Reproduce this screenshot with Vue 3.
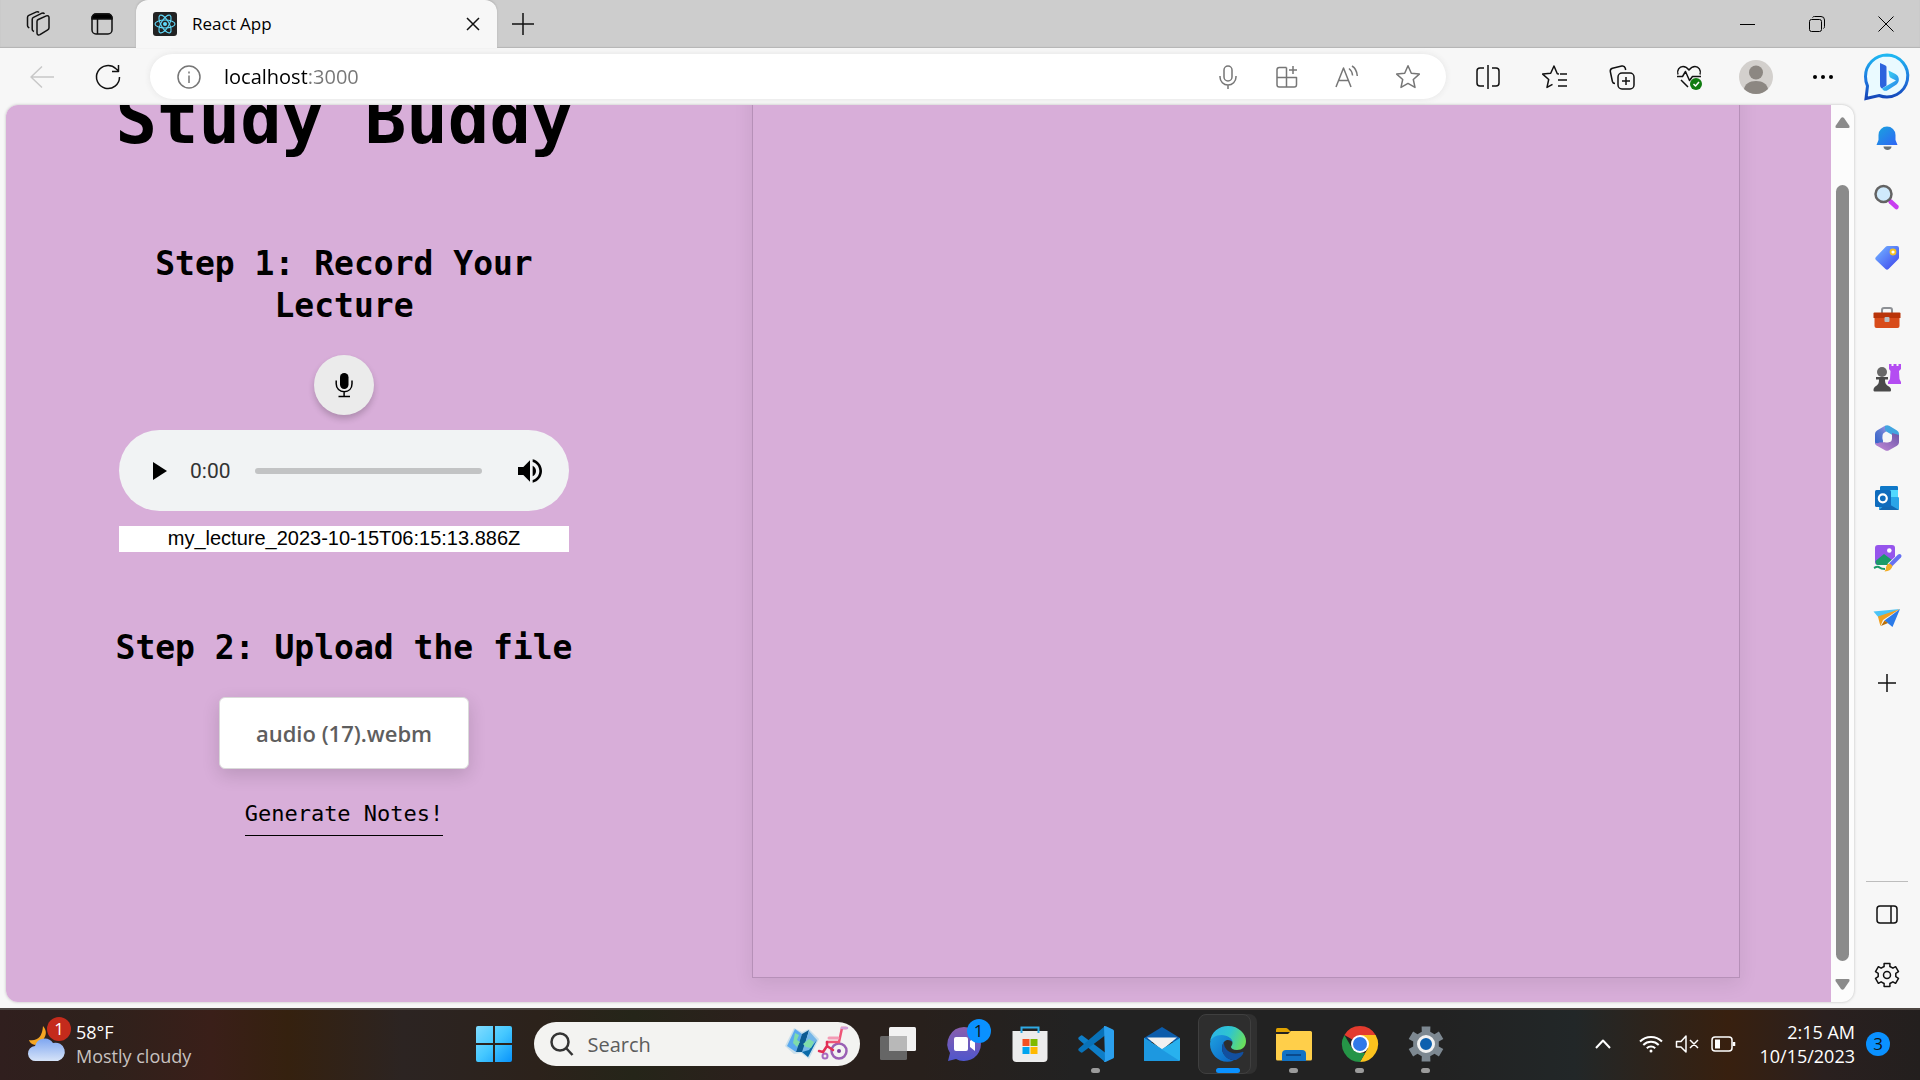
<template>
  <div class="desktop">
    <header class="tabstrip">
      <button class="icon-btn workspaces" aria-label="Workspaces">
        <svg width="26" height="26" viewBox="0 0 26 26" class="line">
          <path d="M11 10.500c0-1 .5-1.600 1.300-2l8-3.600c1.500-.6 2.700.1 2.700 1.600v10.200c0 1-.5 1.700-1.300 2.100l-7.700 4.900c-1.500.8-3 0-3-1.600z" />
          <path d="M8 20.500l-.6-.3c-.8-.5-1.200-1.100-1.200-2V8.500c0-1 .5-1.700 1.300-2.100L16 2.200c1-.4 2 0 2.400.8" />
          <path d="M3.300 17l-.6-.4c-.8-.5-1.200-1.100-1.200-2V6.500c0-1 .5-1.700 1.300-2.100L10.500.9c1-.4 2-.1 2.500.6" />
        </svg>
      </button>
      <button class="icon-btn tab-actions" aria-label="Tab actions">
        <svg width="24" height="24" viewBox="0 0 24 24" class="line">
          <rect x="2" y="2" width="20" height="20" rx="4" />
          <path d="M2 7V6a4 4 0 0 1 4-4h12a4 4 0 0 1 4 4v1z" fill="#000" />
          <path d="M7.500 7v15" />
        </svg>
      </button>
      <div class="tab">
        <svg width="24" height="24" viewBox="0 0 24 24">
          <rect width="24" height="24" rx="3" fill="#222" />
          <g fill="none" stroke="#61dafb" stroke-width="1.100">
            <ellipse cx="12" cy="12" rx="10" ry="4" />
            <ellipse cx="12" cy="12" rx="10" ry="4" transform="rotate(60 12 12)" />
            <ellipse cx="12" cy="12" rx="10" ry="4" transform="rotate(120 12 12)" />
          </g>
          <circle cx="12" cy="12" r="2" fill="#61dafb" />
        </svg>
        <span class="tab-title">React App</span>
        <button class="icon-btn" aria-label="Close tab">
          <svg width="14" height="14" viewBox="0 0 14 14" class="line"><path d="M1 1l12 12M13 1L1 13" /></svg>
        </button>
      </div>
      <button class="icon-btn new-tab" aria-label="New tab">
        <svg width="22" height="22" viewBox="0 0 22 22" class="line"><path d="M11 0v22M0 11h22" /></svg>
      </button>
      <div class="window-controls">
        <button class="icon-btn" aria-label="Minimize">
          <svg width="16" height="16" viewBox="0 0 16 16" class="thin"><path d="M0 8.500h15" /></svg>
        </button>
        <button class="icon-btn" aria-label="Restore">
          <svg width="16" height="16" viewBox="0 0 16 16" class="thin">
            <rect x=".5" y="3.500" width="12" height="12" rx="2" />
            <path d="M3.500 1.500q.5-1 2-1H12q3.500 0 3.500 3.500v6.500q0 1.500-1 2" />
          </svg>
        </button>
        <button class="icon-btn" aria-label="Close">
          <svg width="16" height="16" viewBox="0 0 16 16" class="thin"><path d="M.5.5l15 15M15.500.5l-15 15" /></svg>
        </button>
      </div>
    </header>

    <div class="toolbar">
      <button class="icon-btn back" aria-label="Back" disabled>
        <svg width="24" height="24" viewBox="0 0 24 24" class="line"><path d="M24 12H1M12 1.500L1 12l11 10.500" /></svg>
      </button>
      <button class="icon-btn reload" aria-label="Refresh">
        <svg width="26" height="26" viewBox="0 0 26 26" class="line">
          <path d="M24.500 13A11.500 11.500 0 1 1 21 4.800L23.500 7M23.500 1v6.500H17" />
        </svg>
      </button>
      <form class="address" @submit.prevent>
        <button type="button" class="icon-btn" aria-label="Site information">
          <svg width="24" height="24" viewBox="0 0 24 24" class="line grey">
            <circle cx="12" cy="12" r="11" /><path d="M12 10.500V18M12 6.500v2" />
          </svg>
        </button>
        <input v-model="address" class="address-input" aria-label="Address" />
        <button type="button" class="icon-btn" aria-label="Voice search">
          <svg width="24" height="24" viewBox="0 0 24 24" class="line grey">
            <rect x="8" y="1" width="8" height="15" rx="4" />
            <path d="M4 11v1a8 8 0 0 0 16 0v-1M12 20v4" />
          </svg>
        </button>
        <button type="button" class="icon-btn" aria-label="App available">
          <svg width="24" height="24" viewBox="0 0 24 24" class="line grey">
            <path d="M11.500 2.500H4.300C3 2.500 2 3.500 2 4.800v14.900C2 21 3 22 4.300 22h14.900c1.300 0 2.300-1 2.300-2.300V12.500H2M11.500 2.500V22M18 1v8M14 5h8" />
          </svg>
        </button>
        <button type="button" class="icon-btn" aria-label="Read aloud">
          <svg width="26" height="24" viewBox="0 0 26 24" class="line grey">
            <path d="M2 22L9.500 3 17 22M4.800 15.500h9.500M15 3.500c2 1.500 3.300 4 3.600 7M18 1c3.300 2 5 5.500 5.300 10" />
          </svg>
        </button>
        <button type="button" class="icon-btn" aria-label="Add to favorites">
          <svg width="26" height="26" viewBox="0 0 26 26" class="line grey">
            <path d="M13 1.800l3.300 7.400 8 .9-6 5.400 1.700 7.900-7-4-7 4 1.700-7.900-6-5.400 8-.9z" />
          </svg>
        </button>
      </form>
      <div class="tools">
        <button class="icon-btn" aria-label="Split screen">
          <svg width="26" height="26" viewBox="0 0 26 26" class="line">
            <path d="M9 4H5C3 4 2 5 2 7v12c0 2 1 3 3 3h4M17 4h4c2 0 3 1 3 3v12c0 2-1 3-3 3h-4M13 1v24" />
          </svg>
        </button>
        <button class="icon-btn" aria-label="Favorites">
          <svg width="26" height="26" viewBox="0 0 26 26" class="line">
            <path d="M17 10l-1.700-.3L12 2 8.700 9.200l-8 .9 6 5.400L5 23.400l5.500-3.100M18 10h7M16 16h9M16 22h9" />
          </svg>
        </button>
        <button class="icon-btn" aria-label="Collections">
          <svg width="26" height="26" viewBox="0 0 26 26" class="line">
            <rect x="9" y="9" width="16" height="16" rx="4" />
            <path d="M17 13v8M13 17h8M6 19.500c-1.500 0-2.300-.8-2.600-2L1.300 7.500C1 5.700 2 4.600 3.500 4.200L12.800 2c1.800-.3 3 .5 3.400 2l.5 2" />
          </svg>
        </button>
        <button class="icon-btn" aria-label="Browser essentials">
          <svg width="26" height="26" viewBox="0 0 26 26" class="line">
            <path d="M2 10.500C.5 6 3.500 2.500 7 2.500c2.700 0 4.500 1.500 6 3.500 1.500-2 3.300-3.500 6-3.500 3.500 0 6.500 3.500 5 8M1 12.500h5.500l3-5 4 9 3-4H25M5 16l7 7" />
            <circle cx="20" cy="20" r="6" fill="#107c10" stroke="none" />
            <path d="M17.500 20l2 2 3.500-4" stroke="#fff" />
          </svg>
        </button>
        <button class="icon-btn" aria-label="Profile">
          <svg width="34" height="34" viewBox="0 0 34 34">
            <circle cx="17" cy="17" r="17" fill="#d3d0cd" />
            <circle cx="17" cy="12.500" r="7" fill="#8c8782" />
            <path d="M5 29c1-5 5-8 12-8s11 3 12 8a17 17 0 0 1-24 0z" fill="#8c8782" />
          </svg>
        </button>
        <button class="icon-btn" aria-label="More">
          <svg width="20" height="20" viewBox="0 0 20 20">
            <circle cx="2" cy="10" r="2" /><circle cx="10" cy="10" r="2" /><circle cx="18" cy="10" r="2" />
          </svg>
        </button>
      </div>
      <button class="icon-btn bing" aria-label="Bing chat">
        <svg width="48" height="48" viewBox="0 0 48 48">
          <defs>
            <linearGradient id="bingRing" x1="0" y1="0" x2="0" y2="1">
              <stop offset="0" stop-color="#1fb8f2" /><stop offset=".6" stop-color="#1c72dc" /><stop offset="1" stop-color="#1546b8" />
            </linearGradient>
            <linearGradient id="bingB" x1="0" y1="0" x2="1" y2="1">
              <stop offset="0" stop-color="#43d8ee" /><stop offset=".4" stop-color="#35bdf0" /><stop offset="1" stop-color="#2579e8" />
            </linearGradient>
          </defs>
          <path d="M24 2a21 21 0 1 1-8 40.500L3 45.500 4.500 33C3 30 2.500 27 2.500 23.500A21.500 21.500 0 0 1 24 2z" fill="#eafaff" stroke="url(#bingRing)" stroke-width="3" />
          <path d="M17 10l5 2.300c1 .5 1.500 1 1.500 2.200v18L19 35.500c-1.300-.7-2-1.800-2-3.500z" fill="#2c63dd" />
          <path d="M25.500 17.500l7 3.500c4 2 4.500 7.500 1 10.500l-8.500 5.500c-2.500 1.500-4.800 1-6-1.500l14-8-5-2.500c-1-.5-1.300-1-1.600-2z" fill="url(#bingB)" />
        </svg>
      </button>
    </div>

    <div class="body">
      <div class="viewport">
        <main class="page">
          <section class="steps">
            <h1>Study Buddy</h1>
            <h2>Step 1: Record Your Lecture</h2>
            <button class="record" aria-label="Record">
              <svg width="18" height="26" viewBox="0 0 18 26">
                <rect x="5" y="1" width="8.500" height="16" rx="4.200" />
                <path d="M1.200 8.500v3.200c0 5 3.500 8 8 8s7.800-3 7.800-8V8.500M9.100 20v4M3.500 24.500h11.500" fill="none" stroke="#000" stroke-width="1.500" />
              </svg>
            </button>
            <div class="player">
              <button class="icon-btn" aria-label="Play">
                <svg width="14" height="18" viewBox="0 0 14 18"><path d="M0 0l14 9-14 9z" /></svg>
              </button>
              <span class="time">0:00</span>
              <input v-model="position" type="range" min="0" max="100" aria-label="Playback position" />
              <button class="icon-btn" aria-label="Mute">
                <svg width="24" height="24" viewBox="3 3 18 18">
                  <path d="M3 9v6h4l5 5V4L7 9H3zm13.500 3A4.500 4.500 0 0 0 14 7.970v8.050c1.480-.73 2.500-2.250 2.500-4.020zM14 3.230v2.060c2.890.86 5 3.540 5 6.710s-2.110 5.850-5 6.710v2.060c4.010-.91 7-4.490 7-8.770s-2.990-7.860-7-8.770z" />
                </svg>
              </button>
            </div>
            <input v-model="fileName" class="file-name" aria-label="Recording name" />
            <h2 class="second">Step 2: Upload the file</h2>
            <button class="upload">audio (17).webm</button>
            <button class="generate">Generate Notes!</button>
          </section>
          <section class="notes" aria-label="Notes"></section>
        </main>
        <div class="scrollbar">
          <svg width="15" height="11" viewBox="0 0 15 11"><path d="M6 1q1.500-1.500 3 0l5.500 8q.5 2-1 2h-12q-1.500 0-1-2z" /></svg>
          <div class="thumb"></div>
          <svg width="15" height="11" viewBox="0 0 15 11"><path d="M6 10q1.500 1.500 3 0l5.500-8q.5-2-1-2h-12q-1.500 0-1 2z" /></svg>
        </div>
      </div>

      <aside class="sidebar">
        <button class="icon-btn" aria-label="Notifications">
          <svg width="28" height="28" viewBox="0 0 28 28">
            <defs>
              <linearGradient id="bell" x1="0" y1="0" x2="1" y2="1"><stop offset="0" stop-color="#19a5de" /><stop offset="1" stop-color="#2f64f5" /></linearGradient>
            </defs>
            <path d="M10.500 22.500h8c0 2-2 3.500-4 3.500s-4-1.500-4-3.500z" fill="#6a7075" />
            <path d="M3.500 21l2-5V11a8.500 8.500 0 0 1 17 0v5l2 5z" fill="url(#bell)" />
          </svg>
        </button>
        <button class="icon-btn" aria-label="Search">
          <svg width="28" height="28" viewBox="0 0 28 28">
            <path d="M17.500 17.500l6 5.500" stroke="#c83df0" stroke-width="4.500" stroke-linecap="round" />
            <circle cx="10.500" cy="10" r="8" fill="#cfeafc" stroke="#636363" stroke-width="2.500" />
          </svg>
        </button>
        <button class="icon-btn" aria-label="Shopping">
          <svg width="28" height="28" viewBox="0 0 28 28">
            <defs>
              <linearGradient id="tag" x1="0" y1="0" x2="1" y2="1"><stop offset=".2" stop-color="#6aa2ff" /><stop offset="1" stop-color="#3b3fea" /></linearGradient>
            </defs>
            <path d="M14.500 2H24q2 0 2 2v9.500q0 1-1 2L15.500 25q-1.500 1.500-3 0L3 16q-1.500-1.500 0-3L12.500 3q1-1 2-1z" fill="url(#tag)" />
            <circle cx="20" cy="8" r="2.500" fill="#fff" stroke="#f5c221" stroke-width="1.800" />
          </svg>
        </button>
        <button class="icon-btn" aria-label="Tools">
          <svg width="28" height="28" viewBox="0 0 28 28">
            <path d="M9 9V6q0-2 2-2h6q2 0 2 2v3" fill="none" stroke="#8d9095" stroke-width="2" />
            <rect x="1.500" y="11" width="25" height="13" rx="2" fill="#d84c1b" />
            <path d="M0.500 9.500Q.5 8.500 1.500 8.500h25q1 0 1 1V14H.5z" fill="#b93409" />
            <rect x="11.500" y="13" width="5" height="5" rx="1" fill="#b9bfc4" />
          </svg>
        </button>
        <button class="icon-btn" aria-label="Games">
          <svg width="28" height="28" viewBox="0 0 28 28">
            <path d="M16 0h2.500v2h2V0h3v2h2V0H28v5l-2 2 .5 8 1.500 3v2H15v-2l2-3 .5-8L16 5z" fill="#b44cf2" />
            <circle cx="9" cy="8" r="5" fill="#686868" />
            <path d="M3 13h12v2.500h-3c0 4 1 5 3 6.500 2 1 3 2 3 4 0 1-.5 1.500-1.500 1.500h-14C1 27.500.5 27 .5 26c0-2 1-3 2.500-4 2-1.500 3-2.500 3-6.500H3z" fill="#4a4a4a" />
          </svg>
        </button>
        <button class="icon-btn" aria-label="Microsoft 365">
          <svg width="28" height="28" viewBox="0 0 28 28">
            <defs>
              <linearGradient id="mA" x1="1" y1="0" x2="0" y2="1"><stop offset="0" stop-color="#b49be8" /><stop offset=".5" stop-color="#5a78d0" /><stop offset="1" stop-color="#2f5fc8" /></linearGradient>
              <linearGradient id="mB" x1="0" y1="1" x2="1" y2="0"><stop offset="0" stop-color="#c58ad8" /><stop offset="1" stop-color="#6b55a8" /></linearGradient>
            </defs>
            <path d="M12 1.800L4 6.400Q2 7.600 2 10v8.500q0 2 2 3l6.500 1-1-11q0-2 2-3L17 5z" fill="url(#mA)" />
            <path d="M12 1.800q2-1.300 4.200 0L24 6.400q2 1.200 2 3.600v6l-7.500-5.500L12.500 7q-1-3-.5-5.200z" fill="#42a5e0" />
            <path d="M26 11v7.500q0 2-2 3.200l-8 4.600q-2 1-4 0L4 21.800q-1.500-1-2-3.300 2 1.500 4.500 0L17 18q2-1 2-3.500V9z" fill="url(#mB)" />
            <circle cx="14" cy="14" r="4.500" fill="#f7f7f7" />
          </svg>
        </button>
        <button class="icon-btn" aria-label="Outlook">
          <svg width="28" height="28" viewBox="0 0 28 28">
            <rect x="7" y="2" width="18" height="20" rx="1.500" fill="#28a8ea" />
            <path d="M7 3.500Q7 2 8.500 2h15Q25 2 25 3.500V6H7z" fill="#0f78c8" />
            <rect x="16" y="6" width="9" height="7" fill="#50d9ff" />
            <path d="M26 13v12q0 1-1 1H7q-1 0-1-1V14l10 6z" fill="#2aa4e8" />
            <path d="M26 26l-12-7-8 7z" fill="#1268b3" />
            <rect x="2" y="6" width="16" height="17" rx="1.500" fill="#0f6cbd" />
            <circle cx="9.800" cy="14.300" r="4" fill="none" stroke="#fff" stroke-width="2.200" />
          </svg>
        </button>
        <button class="icon-btn" aria-label="Image creator">
          <svg width="30" height="28" viewBox="0 0 30 28">
            <rect x="3" y="1" width="20" height="20" rx="3" fill="#9655ec" />
            <path d="M3.500 17l8.500-7 10.500 8q0 3-3 3H6q-2.500 0-2.500-4z" fill="#1c9b69" />
            <circle cx="17.300" cy="6.500" r="2.300" fill="#fff" />
            <path d="M28.500 12.500L18 22" stroke="#f7f7f7" stroke-width="7" />
            <path d="M27.500 12L19 20.500" stroke="#6670f2" stroke-width="4" stroke-linecap="round" />
            <path d="M15.500 20q3-1 5 2-1 5-8 5.500 2-3 1.500-4.500z" fill="#f1ae28" />
            <path d="M2 24q4-2 5.500-.5T13 25" fill="none" stroke="#1c9b69" stroke-width="2" />
          </svg>
        </button>
        <button class="icon-btn" aria-label="Drop">
          <svg width="28" height="28" viewBox="0 0 28 28">
            <path d="M.5 7.500L27 5 6 14z" fill="#4cc4f7" />
            <path d="M5 12.500L27 5 10 16l-2.500 6q-1-3-2.500-9.500z" fill="#f0a020" />
            <path d="M27 5l-7.500 18-8-6.500z" fill="#2c7be8" />
            <path d="M11.500 16.500L15 19l-7 3z" fill="#b86f08" />
          </svg>
        </button>
        <button class="icon-btn add" aria-label="Customize">
          <svg width="18" height="18" viewBox="0 0 18 18" class="line"><path d="M9 0v18M0 9h18" /></svg>
        </button>
        <div class="sidebar-bottom">
          <button class="icon-btn" aria-label="Hide sidebar">
            <svg width="24" height="24" viewBox="0 0 24 24" class="line">
              <rect x="2" y="3" width="20" height="17" rx="3" /><path d="M16 3v17" />
            </svg>
          </button>
          <button class="icon-btn" aria-label="Settings">
            <svg width="26" height="26" viewBox="0 0 26 26" class="line">
              <path :d="cog(13, 13, 12, 9)" /><circle cx="13" cy="13" r="3.500" />
            </svg>
          </button>
        </div>
      </aside>
    </div>

    <footer class="taskbar">
      <button class="weather">
        <span class="weather-icon">
          <svg width="38" height="38" viewBox="0 0 38 38">
            <defs>
              <linearGradient id="cloud" x1="0" y1="0" x2="0" y2="1"><stop offset="0" stop-color="#7ea6f0" /><stop offset="1" stop-color="#d6e3f8" /></linearGradient>
            </defs>
            <path d="M15 1q7 8-3 17l-5 2q-5-1-6-5 13 2 14-14z" fill="#f5a623" />
            <path d="M8 36a7.500 7.500 0 0 1-1-15 10 10 0 0 1 18-3 9 9 0 0 1 5 18z" fill="url(#cloud)" />
          </svg>
          <span class="badge red">1</span>
        </span>
        <span class="two-lines"><span>58°F</span><span class="dim">Mostly cloudy</span></span>
      </button>

      <nav class="apps" aria-label="Taskbar">
        <button class="icon-btn" aria-label="Start">
          <svg width="36" height="36" viewBox="0 0 36 36">
            <defs>
              <linearGradient id="win" x1="0" y1="0" x2="1" y2="1"><stop offset="0" stop-color="#81dcff" /><stop offset=".5" stop-color="#45c8ff" /><stop offset="1" stop-color="#0893fb" /></linearGradient>
            </defs>
            <path d="M2 0h15v17H0V2Q0 0 2 0zM19 0h15q2 0 2 2v15H19zM0 19h17v17H2q-2 0-2-2zM19 19h17v15q0 2-2 2H19z" fill="url(#win)" />
          </svg>
        </button>
        <label class="search">
          <svg width="24" height="24" viewBox="0 0 24 24" fill="none" stroke="#333" stroke-width="2.500">
            <circle cx="10" cy="10" r="8.500" /><path d="M16 16l6.500 7" />
          </svg>
          <input type="search" placeholder="Search" aria-label="Search" />
          <svg width="66" height="34" viewBox="0 0 66 34">
            <path d="M9 1l8 4 7-3 10 10-10 20-8-6-7 1L0 19z" fill="#c9dfeb" />
            <path d="M10 2l7 5-6 18-9-6z" fill="#5aa9ef" />
            <path d="M17 7l7-4-6 22-7 0z" fill="#0b5a92" />
            <path d="M24 4l8 9-9 17-6-5z" fill="#74b6e8" />
            <path d="M32 13l-9 17-6-5 7-2z" fill="#0a6aa8" />
            <path d="M10 6l4 2-2 5 3 2-3 5-4-4zM24 12l5 3-3 6-5-1-3-3z" fill="#7fdcaa" />
            <g fill="none" stroke-linecap="round">
              <circle cx="54" cy="24" r="7.500" stroke="#9a60b4" stroke-width="2.500" />
              <circle cx="40" cy="29" r="2.500" stroke="#a66cc0" stroke-width="2" />
              <path d="M61 1h-4l-3 14H42" stroke="#ee5576" stroke-width="2.500" />
              <path d="M44 11h9" stroke="#f39bb5" stroke-width="3" />
              <path d="M42 15v4l-4 6-4-1M42 19l6 4" stroke="#e22f55" stroke-width="2.500" />
              <path d="M57 1h5" stroke="#d2a1da" stroke-width="2.500" />
            </g>
            <circle cx="54" cy="24" r="2" fill="#7c3f9c" />
          </svg>
        </label>
        <button class="icon-btn app" aria-label="Task view">
          <svg width="36" height="36" viewBox="0 0 36 36">
            <rect x="0" y="10" width="27" height="24" rx="1.500" fill="#666" />
            <rect x="9" y="1" width="27" height="24" rx="1.500" fill="#f2f2f2" />
            <path d="M9 10h18v15H10.500Q9 25 9 23.500z" fill="#b8b8b8" />
          </svg>
        </button>
        <button class="icon-btn app" aria-label="Chat">
          <svg width="36" height="36" viewBox="0 0 36 36">
            <defs>
              <linearGradient id="chat" x1="0" y1="0" x2="0" y2="1"><stop offset="0" stop-color="#8a5fae" /><stop offset="1" stop-color="#4f56cc" /></linearGradient>
            </defs>
            <path d="M18 1a17 17 0 1 1-8 32l-8 2 2-8A17 17 0 0 1 18 1z" fill="url(#chat)" />
            <rect x="8" y="11" width="14" height="14" rx="2" fill="#fff" />
            <path d="M24 15l5-4v14l-5-4z" fill="#fff" />
          </svg>
          <span class="badge blue">1</span>
        </button>
        <button class="icon-btn app" aria-label="Store">
          <svg width="36" height="36" viewBox="0 0 36 36">
            <path d="M9.500 7V1.500h17V7" fill="none" stroke="#2ea9e4" stroke-width="2" />
            <path d="M.5 5h35v27q0 4-4 4h-27q-4 0-4-4z" fill="#ececec" />
            <path d="M9.500 7V5M26.500 7V5" stroke="#2ea9e4" stroke-width="2" />
            <path d="M10.500 13h7v7h-7z" fill="#f25022" /><path d="M18.500 13h7v7h-7z" fill="#7fba00" />
            <path d="M10.500 21h7v7h-7z" fill="#00a4ef" /><path d="M18.500 21h7v7h-7z" fill="#ffb900" />
          </svg>
        </button>
        <button class="icon-btn app running" aria-label="Visual Studio Code">
          <svg width="36" height="36" viewBox="0 0 36 36">
            <path d="M3 9.500Q4 9 5 10l22 16.500V36L.7 13.500q-1-1.200 0-2.200z" fill="#0e7ec8" />
            <path d="M3 26.500Q4 27 5 26L27 9.500V0L.7 22.500q-1 1.200 0 2.200z" fill="#0872b9" />
            <path d="M26 0q1-.3 2 .2l7 3.300q1 .5 1 1.500v26q0 1-1 1.500l-7 3.300q-1 .5-2 .2l1-2z" fill="#2ba0ee" />
          </svg>
        </button>
        <button class="icon-btn app" aria-label="Mail">
          <svg width="36" height="36" viewBox="0 0 36 36">
            <path d="M0 12L18 1l18 11v4H0z" fill="#0b5cab" />
            <path d="M3 11.500h30L18 24z" fill="#f1f1f1" />
            <path d="M0 12l18 11L36 12v22q0 1-1 1H1q-1 0-1-1z" fill="#28b1ee" />
            <path d="M0 12l35 22.500L34.500 35H1q-1 0-1-1z" fill="#1d98e0" />
          </svg>
        </button>
        <button class="icon-btn app running active" aria-label="Microsoft Edge">
          <svg width="36" height="36" viewBox="0 0 36 36">
            <defs>
              <linearGradient id="edgeTop" x1="0" y1=".3" x2="1" y2=".6"><stop offset="0" stop-color="#2bb5e8" /><stop offset=".5" stop-color="#2fc5cf" /><stop offset="1" stop-color="#6be05a" /></linearGradient>
              <linearGradient id="edgeLow" x1="0" y1="0" x2="1" y2="1"><stop offset="0" stop-color="#1ea0e0" /><stop offset="1" stop-color="#0a63c4" /></linearGradient>
            </defs>
            <path d="M0 16C1 6 9 0 18 0c11 0 18 8 18 15 0 6-4 9-9 9-4 0-6-1.500-6-3 0-1 1.500-2 1.500-4 0-4-5-7-10-7C7 10 1 13 0 16z" fill="url(#edgeTop)" />
            <path d="M0 18c0-6 6-9 11.500-9C18 9 22.500 13 22.500 16c-2-2-6-3-8.500 0-5 7 0 17 10 18.500-12 4.500-24-4-24-16.500z" fill="url(#edgeLow)" />
            <path d="M14 16c-5 7 0 19 12 18 4-2 7-5 7.500-7.500 0-.7-.5-1-1.200-.5C23 30 13.500 25 14 16z" fill="#124f9f" />
          </svg>
        </button>
        <button class="icon-btn app running" aria-label="File Explorer">
          <svg width="36" height="36" viewBox="0 0 36 36">
            <path d="M0 3.500Q0 2 1.500 2H10q1 0 2 1l3 3H0z" fill="#e0a200" />
            <path d="M0 8h12l3-3h19.500Q36 5 36 6.500V33q0 1.500-1.500 1.500h-33Q0 34.500 0 33z" fill="#ffcf4a" />
            <path d="M6 35V28q0-4 4-4h16q4 0 4 4v7z" fill="#1272c4" />
            <path d="M10 29h15" stroke="#0a4a8c" stroke-width="2" />
          </svg>
        </button>
        <button class="icon-btn app running" aria-label="Google Chrome">
          <svg width="36" height="36" viewBox="0 0 36 36">
            <path d="M18 18L2.400 9A18 18 0 0 1 33.600 9z" fill="#e33b2e" />
            <path d="M18 9h15.600A18 18 0 0 1 18 36l7.800-13.500z" fill="#fcc31e" />
            <path d="M2.400 9l7.800 13.500L18 27h5.200L18 36A18 18 0 0 1 2.400 9z" fill="#259447" />
            <circle cx="18" cy="18" r="9" fill="#fff" /><circle cx="18" cy="18" r="7" fill="#3079e8" />
          </svg>
        </button>
        <button class="icon-btn app running" aria-label="Settings">
          <svg width="36" height="36" viewBox="0 0 36 36">
            <path :d="cog(18, 18, 18, 13)" fill="#7d8891" />
            <circle cx="18" cy="18" r="7.500" fill="#0d60ae" stroke="#f2f2f2" stroke-width="3" />
          </svg>
        </button>
      </nav>

      <div class="tray">
        <button class="icon-btn" aria-label="Show hidden icons">
          <svg width="16" height="10" viewBox="0 0 16 10" class="light"><path d="M1 9l7-7.500L15 9" /></svg>
        </button>
        <button class="icon-btn status" aria-label="Network, volume and battery">
          <svg width="24" height="20" viewBox="0 0 24 20" class="light">
            <path d="M1 7.500a15.500 15.500 0 0 1 22 0M4.300 11a11 11 0 0 1 15.400 0M7.800 14.300a6 6 0 0 1 8.400 0" />
            <circle cx="12" cy="17" r="1.500" fill="#fff" stroke="none" />
          </svg>
          <svg width="24" height="20" viewBox="0 0 24 20" class="light thinner">
            <path d="M11 2v16l-5-5H1.500V7.500H6zM15 6l8 8M23 6l-8 8" />
          </svg>
          <svg width="24" height="20" viewBox="0 0 24 20" class="light thinner">
            <rect x="1" y="3" width="20" height="14" rx="3" /><path d="M4 5.500h5v9H4z" fill="#fff" stroke="none" /><path d="M23 8v4" stroke-width="2.500" />
          </svg>
        </button>
        <button class="clock">
          <span class="two-lines right"><span>2:15 AM</span><span>10/15/2023</span></span>
          <span class="badge blue static">3</span>
        </button>
      </div>
    </footer>
  </div>
</template>

<script setup>
import { ref } from 'vue'

const address = ref('localhost:3000')
const fileName = ref('my_lecture_2023-10-15T06:15:13.886Z')
const position = ref(0)

// six-toothed gear outline
function cog(cx, cy, outer, inner) {
  const points = []
  const offsets = [[-19, inner], [-14, outer], [14, outer], [19, inner]]
  for (let tooth = 0; tooth < 6; tooth++) {
    for (const [deg, r] of offsets) {
      const a = ((tooth * 60 + deg - 90) * Math.PI) / 180
      points.push(`${(cx + r * Math.cos(a)).toFixed(1)} ${(cy + r * Math.sin(a)).toFixed(1)}`)
    }
  }
  return `M${points.join('L')}z`
}
</script>

<style>
body { margin: 0; }
</style>

<style scoped>
.desktop {
  display: flex; flex-direction: column;
  height: 100vh; overflow: hidden;
  background: #f7f7f7; color: #000;
  font-family: 'Open Sans', 'Noto Sans', sans-serif;
}
.desktop * { box-sizing: border-box; }
button, input { font: inherit; color: inherit; }
button { padding: 0; border: 0; background: none; }
input { min-width: 0; border: 0; outline: 0; background: none; }
svg { display: block; flex: none; overflow: visible; }

.icon-btn { display: flex; flex: none; align-items: center; justify-content: center; }
.line { fill: none; stroke: #111; stroke-width: 1.5; stroke-linejoin: round; }
.line.grey { stroke: #767676; }
.thin { fill: none; stroke: #000; stroke-width: 1; }
.light { fill: none; stroke: #fff; stroke-width: 2; stroke-linejoin: round; }
.light.thinner { stroke-width: 1.5; }

/* tab strip */
.tabstrip {
  display: flex; flex: none; align-items: center;
  height: 48px; background: #cdcdcd;
  box-shadow: inset 0 -1px 1px #b4b4b4;
}
.workspaces { width: 50px; margin-left: 14px; }
.tab-actions { width: 50px; margin-left: 13px; }
.tab {
  display: flex; align-items: center;
  width: 361px; height: 48px; margin-left: 9px; padding: 0 17px;
  border-radius: 12px 12px 0 0; background: #f7f7f7;
  box-shadow: 0 -1px 2px #b0b0b0;
}
.tab-title { flex: 1; margin-left: 15px; font-size: 17px; line-height: 24px; }
.new-tab { width: 52px; height: 48px; }
.window-controls { display: flex; margin-left: auto; }
.window-controls .icon-btn { width: 69px; height: 48px; }

/* toolbar */
.toolbar { display: flex; flex: none; align-items: center; height: 57px; padding-right: 9px; }
.back { width: 24px; margin-left: 30px; }
.back .line { stroke: #c8c8c8; }
.reload { width: 26px; margin: 0 29px 0 41px; }
.address {
  display: flex; flex: 1; align-items: center; gap: 35px;
  height: 45px; padding: 0 25px 0 27px;
  border-radius: 23px; background: #fff;
  box-shadow: 0 0 6px #e4e4e4;
}
.address-input {
  flex: 1; margin-left: -12px; padding: 0;
  font-size: 20px; line-height: 28px; color: transparent;
  background: linear-gradient(90deg, #000 83px, #767676 83px);
  background-clip: text; -webkit-background-clip: text;
}
.tools { display: flex; align-items: center; margin: 0 7px 0 8px; }
.tools .icon-btn { width: 67px; height: 45px; }
.bing { width: 48px; }

/* browser body */
.body { display: flex; flex: 1; min-height: 0; }
.viewport {
  display: flex; flex: 1; min-width: 0;
  margin: 0 0 6px 6px; overflow: hidden;
  border-radius: 12px; background: #fcfcfc;
  box-shadow: 0 0 3px #bbb;
}
/* scrolled to its end, so the columns hang from the bottom edge */
.page {
  display: grid; flex: 1; align-items: end;
  grid-template-columns: 676fr 70fr 988fr 91fr;
  grid-template-rows: 100%;
  background: #d8aed9; overflow: hidden;
}
.steps {
  display: flex; flex-direction: column; align-items: center;
  padding-bottom: 166px; text-align: center;
}
h1, h2 { margin: 0; font-family: 'DejaVu Sans Mono', 'Liberation Mono', monospace; font-weight: 700; }
h1 { font-size: 69px; line-height: 80px; white-space: nowrap; }
h2 { max-width: 460px; margin-top: 84px; font-size: 33px; line-height: 42px; }
h2.second { margin-top: 75px; }
.record {
  display: flex; align-items: center; justify-content: center;
  width: 60px; height: 60px; margin-top: 28px;
  border-radius: 50%; background: #ebebeb;
  box-shadow: 0 4px 6px #00000030;
}
.player {
  display: flex; align-items: center;
  width: 450px; height: 81px; margin-top: 15px; padding: 0 27px 0 34px;
  border-radius: 41px; background: #f1f3f4;
}
.time { margin: 0 24px 0 23px; font-family: Roboto, sans-serif; font-size: 21px; color: #333; }
.player input { flex: 1; height: 6px; margin: 0 36px 0 0; appearance: none; border-radius: 3px; background: #c2c3c4; }
.player input::-webkit-slider-thumb { appearance: none; width: 0; height: 0; }
.file-name {
  width: 450px; height: 26px; margin-top: 15px; padding: 0 0 2px;
  background: #fff; text-align: center;
  font-family: 'Liberation Sans', Arial, sans-serif; font-size: 20px;
}
.upload {
  width: 250px; height: 72px; margin-top: 28px;
  border: 1px solid #d9d9d9; border-radius: 6px; background: #fff;
  box-shadow: 0 6px 18px #00000024;
  font-size: 22px; font-weight: 600; color: #5e5e5e;
}
.generate {
  height: 45px; margin-top: 22px; border-bottom: 1px solid #000;
  font-family: 'DejaVu Sans Mono', monospace; font-size: 22px;
}
.notes {
  grid-column: 3; height: 1000px; margin-bottom: 24px;
  border: 1px solid #b690b8; box-shadow: 0 6px 18px #00000014;
}
.scrollbar {
  display: flex; flex: none; flex-direction: column; align-items: center; justify-content: space-between;
  width: 23px; padding: 12px 0;
  fill: #8b8b8b;
}
.thumb { flex: 1; width: 13px; margin: 57px 0 18px; border-radius: 7px; background: #8b8b8b; }

/* edge sidebar */
.sidebar {
  display: flex; flex: none; flex-direction: column; align-items: center;
  width: 66px; padding: 3px 0;
}
.sidebar .icon-btn { width: 60px; height: 60px; }
.sidebar .add { margin-top: 5px; }
.sidebar-bottom { margin-top: auto; }
.sidebar-bottom::before { content: ''; display: block; width: 42px; margin: 0 auto 3px; border-top: 1px solid #bdbdbd; }

/* taskbar */
.taskbar {
  display: grid; flex: none; align-items: center;
  grid-template-columns: 1fr auto 1fr;
  height: 72px; box-shadow: inset 0 2px #4d4643; color: #fff;
  background: linear-gradient(90deg, #301f1e 0, #2e211c 5%, #3a1f19 11%, #35210f 15%, #2c2422 21%, #2c221b 28%, #252519 33%, #2b201c 39%, #28201c 48%, #222 56%, #222 75%, #222728 82%, #38200f 90%, #2a201f 95%, #231f1e 100%);
}
.weather { display: flex; gap: 10px; margin-left: 28px; justify-self: start; text-align: left; }
.weather-icon { position: relative; padding-top: 5px; }
.two-lines { display: flex; flex-direction: column; font-size: 18px; line-height: 24px; }
.two-lines .dim { color: #c8c2c0; }
.right { text-align: right; }
.badge {
  position: absolute; top: -8px; right: -10px;
  width: 24px; height: 24px; border-radius: 50%;
  font-size: 17px; line-height: 24px; text-align: center;
}
.badge.red { top: -3px; right: -5px; background: #c42b1c; }
.badge.blue { background: #0a91ff; color: #111; }
.badge.static { position: static; }
.apps { display: flex; align-items: center; margin-left: 14px; }
.search {
  display: flex; align-items: center;
  width: 326px; height: 44px; margin: 0 5px 0 22px; padding: 0 9px 0 16px;
  border-radius: 22px; background: #f3f3f1;
}
.search input { flex: 1; margin-left: 12px; font-size: 20px; }
.search input::placeholder { color: #5c5c5c; opacity: 1; }
.app { position: relative; width: 66px; height: 60px; }
.app .badge { top: 5px; right: 6px; }
.running::after {
  content: ''; position: absolute; bottom: 1px; left: 50%;
  width: 9px; height: 5px; margin-left: -5px; border-radius: 3px; background: #9b9b9b;
}
.active::before {
  content: ''; position: absolute; inset: 0 10px 0 3px; z-index: 0;
  border: 1px solid #3f3f3f; border-radius: 8px;
  background: #2e2e2e; box-shadow: 6px 0 0 #303030;
}
.active svg { position: relative; }
.active::after { width: 24px; margin-left: -12px; background: #0a91ff; }
.tray { display: flex; align-items: center; justify-self: end; margin-right: 30px; }
.status { gap: 12px; margin: 0 24px 0 28px; }
.clock { display: flex; align-items: center; gap: 11px; }
</style>
